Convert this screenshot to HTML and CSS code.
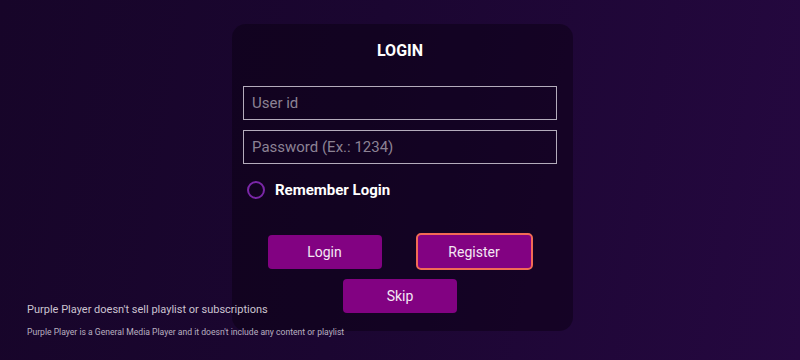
FILE: index.html
```html
<!DOCTYPE html>
<html>
<head>
<meta charset="utf-8">
<link rel="stylesheet" href="styles.css">
</head>
<body>
<div class="page">
  <div class="card">
    <div class="title">LOGIN</div>
    <div class="field"><span class="placeholder">User id</span></div>
    <div class="field"><span class="placeholder">Password (Ex.: 1234)</span></div>
    <div class="remember">
      <span class="radio"></span>
      <span class="remember-label">Remember Login</span>
    </div>
    <div class="btn-row">
      <div class="btn">Login</div>
      <div class="btn btn-focus">Register</div>
    </div>
    <div class="btn-row">
      <div class="btn">Skip</div>
    </div>
  </div>
  <div class="footer">
    <div class="footer-main">Purple Player doesn't sell playlist or subscriptions</div>
    <div class="footer-sub">Purple Player is a General Media Player and it doesn't include any content or playlist</div>
  </div>
</div>
</body>
</html>
```

FILE: styles.css
```css
html, body {
  margin: 0;
  padding: 0;
}
body {
  width: 800px;
  height: 360px;
  overflow: hidden;
  font-family: Roboto, "Noto Sans", sans-serif;
  background: linear-gradient(100deg, #170529 0%, #1b0631 45%, #250840 100%);
}
.page {
  position: relative;
  width: 800px;
  height: 360px;
  padding-top: 24px;
  padding-left: 232px;
  box-sizing: border-box;
}
.card {
  width: 341px;
  height: 307px;
  box-sizing: border-box;
  border-radius: 14px;
  background: rgba(8, 1, 16, 0.45);
  padding: 17px 16px 0 11px;
  display: flex;
  flex-direction: column;
}
.title {
  color: #ffffff;
  font-weight: 700;
  font-size: 16px;
  line-height: 20px;
  text-align: center;
  margin-bottom: 25px;
}
.field {
  width: 314px;
  height: 34px;
  box-sizing: border-box;
  border: 1.5px solid #b4acbc;
  display: flex;
  align-items: center;
  padding-left: 8px;
  margin-bottom: 10px;
}
.placeholder {
  color: #8c8294;
  font-size: 15px;
}
.remember {
  display: flex;
  align-items: center;
  margin-top: 6px;
  padding-left: 4px;
  height: 20px;
}
.radio {
  width: 14px;
  height: 14px;
  border: 2px solid #7b27a8;
  border-radius: 50%;
  margin-right: 10px;
}
.remember-label {
  color: #ffffff;
  font-weight: 700;
  font-size: 15px;
}
.btn-row {
  display: flex;
  justify-content: center;
  align-items: center;
  gap: 34px;
  margin-top: 9px;
}
.remember + .btn-row {
  margin-top: 33px;
}
.btn {
  width: 114px;
  height: 34px;
  box-sizing: border-box;
  background: #820282;
  border-radius: 4px;
  color: #f4e8f4;
  font-size: 14px;
  display: flex;
  align-items: center;
  justify-content: center;
}
.btn-focus {
  width: 117px;
  height: 37px;
  border: 2px solid #f26b55;
  border-radius: 5px;
}
.footer {
  position: absolute;
  left: 27px;
  top: 302px;
}
.footer-main {
  color: #cbc3d0;
  font-size: 11px;
  line-height: 16px;
}
.footer-sub {
  color: #b9b0c0;
  font-size: 8.6px;
  line-height: 12px;
  margin-top: 8px;
}
```
